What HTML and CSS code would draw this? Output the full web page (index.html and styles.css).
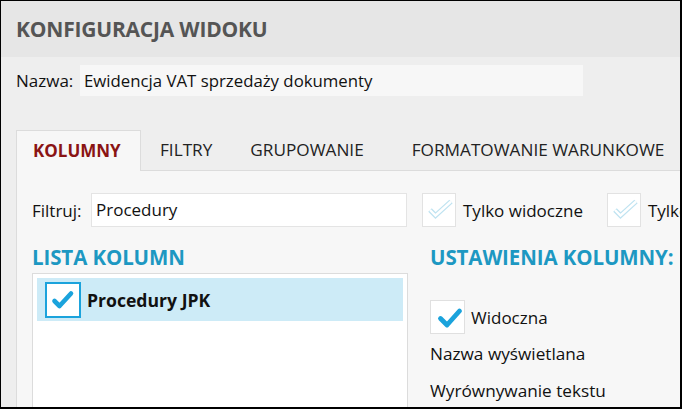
FILE: index.html
```html
<!DOCTYPE html>
<html lang="pl">
<head>
<meta charset="utf-8">
<title>Konfiguracja widoku</title>
<link rel="stylesheet" href="styles.css">
</head>
<body>
<div class="window">
  <div class="header"><h1 class="title">KONFIGURACJA WIDOKU</h1></div>
  <div class="main">
    <div class="name-row">
      <span class="label name-label">Nazwa:</span>
      <div class="name-input">Ewidencja VAT sprzedaży dokumenty</div>
    </div>
    <div class="tabs">
      <div class="tab active">KOLUMNY</div>
      <div class="tab tab-first">FILTRY</div>
      <div class="tab">GRUPOWANIE</div>
      <div class="tab tab-last">FORMATOWANIE WARUNKOWE</div>
    </div>
    <div class="panel">
      <div class="filter-row">
        <span class="label filter-label">Filtruj:</span>
        <div class="filter-input">Procedury</div>
        <div class="opt">
          <div class="check faint">
            <svg viewBox="0 0 32 32" width="32" height="32"><path d="M7 16 L12.5 21.5 L28 7.5" fill="none" stroke="#bfe3f1" stroke-width="5"/><path d="M7 16 L12.5 21.5 L28 7.5" fill="none" stroke="#fff" stroke-width="2.4"/></svg>
          </div>
          <span class="check-label">Tylko widoczne</span>
        </div>
        <div class="opt">
          <div class="check faint">
            <svg viewBox="0 0 32 32" width="32" height="32"><path d="M7 16 L12.5 21.5 L28 7.5" fill="none" stroke="#bfe3f1" stroke-width="5"/><path d="M7 16 L12.5 21.5 L28 7.5" fill="none" stroke="#fff" stroke-width="2.4"/></svg>
          </div>
          <span class="check-label">Tylko zaznaczone</span>
        </div>
      </div>
      <div class="columns">
        <div class="col-left">
          <h2 class="section">LISTA KOLUMN</h2>
          <div class="list">
            <div class="list-item">
              <div class="check selected">
                <svg viewBox="0 0 32 32" width="32" height="32"><path d="M7.5 17 L12.5 22 L24 9.5" fill="none" stroke="#1ba3dc" stroke-width="4.6" stroke-linecap="round" stroke-linejoin="round"/></svg>
              </div>
              <span class="item-text">Procedury JPK</span>
            </div>
          </div>
        </div>
        <div class="col-right">
          <h2 class="section">USTAWIENIA KOLUMNY:</h2>
          <div class="visible-row">
            <div class="check plain">
              <svg viewBox="0 0 32 32" width="32" height="32"><path d="M8.5 17.5 L15 24 L27.5 10" fill="none" stroke="#1ba3dc" stroke-width="4.8" stroke-linecap="round" stroke-linejoin="round"/></svg>
            </div>
            <span class="check-label">Widoczna</span>
          </div>
          <div class="setting">Nazwa wyświetlana</div>
          <div class="setting">Wyrównywanie tekstu</div>
        </div>
      </div>
    </div>
  </div>
</div>
</body>
</html>
```

FILE: styles.css
```css
* { box-sizing: border-box; }
html, body { margin: 0; padding: 0; }
body {
  width: 682px;
  height: 409px;
  overflow: hidden;
  font-family: "Open Sans", "Noto Sans", sans-serif;
  color: #111;
  background: #000;
}
.window {
  width: 682px;
  height: 409px;
  border-style: solid;
  border-color: #000;
  border-width: 1px 2px 2px 1px;
  overflow: hidden;
  display: flex;
  flex-direction: column;
  background: #eeeeee;
}
.header {
  height: 56px;
  background: #e6e6e6;
  display: flex;
  align-items: center;
  padding-left: 15px;
  flex: none;
}
.title {
  margin: 0;
  font-size: 21px;
  font-weight: 700;
  color: #555;
  letter-spacing: -0.2px;
}
.main {
  flex: 1;
  display: flex;
  flex-direction: column;
  padding-left: 15px;
  min-height: 0;
}
.label { font-size: 17px; }
.name-row {
  display: flex;
  align-items: center;
  margin-top: 8px;
  height: 31px;
}
.name-label { width: 64px; flex: none; }
.name-input {
  width: 503px;
  height: 31px;
  background: #f7f7f7;
  font-size: 16.8px;
  line-height: 31px;
  padding-left: 4px;
}
.tabs {
  display: flex;
  margin-top: 34px;
  height: 40px;
  flex: none;
  white-space: nowrap;
}
.tab {
  flex: none;
  font-size: 17.2px;
  line-height: 40px;
  padding: 0 19px;
  color: #222;
}
.tab.tab-first { padding-left: 19px; }
.tab.active {
  width: 125px;
  padding: 0 0 0 16px;
  background: #f7f7f7;
  border: 1px solid #dcdcdc;
  border-bottom: none;
  color: #8a1414;
  font-weight: 700;
  font-size: 17px;
  position: relative;
  z-index: 1;
  height: 41px;
  line-height: 40px;
}
.tab.tab-last { padding-left: 29px; padding-right: 0; }
.panel {
  flex: 1;
  background: #f7f7f7;
  border-top: 1px solid #dcdcdc;
  border-left: 1px solid #dcdcdc;
  padding: 22px 0 0 15px;
  min-height: 0;
  display: flex;
  flex-direction: column;
}
.filter-row {
  display: flex;
  align-items: center;
  height: 34px;
  white-space: nowrap;
}
.filter-label { width: 59px; flex: none; }
.filter-input {
  flex: none;
  width: 316px;
  height: 34px;
  background: #fff;
  border: 1px solid #e4e4e4;
  font-size: 17px;
  line-height: 32px;
  padding-left: 4px;
}
.opt {
  display: flex;
  align-items: center;
  margin-left: 15px;
  flex: none;
}
.opt + .opt { margin-left: 24px; }
.check {
  flex: none;
  display: flex;
  align-items: center;
  justify-content: center;
  background: #fff;
}
.check.faint {
  width: 34px;
  height: 34px;
  border: 1px solid #e2e2e2;
}
.check-label {
  font-size: 17px;
  margin-left: 7px;
}
.columns {
  display: flex;
  margin-top: 18px;
  flex: 1;
  min-height: 0;
}
.col-left {
  width: 376px;
  flex: none;
  display: flex;
  flex-direction: column;
}
.section {
  margin: 0;
  font-size: 20.5px;
  font-weight: 700;
  color: #1d98c2;
  line-height: 24px;
  letter-spacing: -0.1px;
  white-space: nowrap;
}
.list {
  margin-top: 4px;
  flex: 1;
  background: #fff;
  border: 1px solid #dcdcdc;
  border-bottom: none;
  padding: 4px;
}
.list-item {
  height: 43px;
  background: #cdebf7;
  display: flex;
  align-items: center;
  padding-left: 8px;
}
.check.selected {
  width: 36px;
  height: 36px;
  border: 2px solid #1ba3dc;
}
.item-text {
  font-size: 17.6px;
  font-weight: 700;
  margin-left: 6px;
  color: #111;
}
.col-right {
  margin-left: 22px;
  display: flex;
  flex-direction: column;
}
.visible-row {
  display: flex;
  align-items: center;
  margin-top: 31px;
}
.check.plain {
  width: 35px;
  height: 34px;
  border: 1px solid #e0e0e0;
}
.visible-row .check-label { margin-left: 6px; }
.setting {
  font-size: 17.2px;
  margin-top: 6px;
  line-height: 27px;
  white-space: nowrap;
}
.setting + .setting { margin-top: 10px; }
```
